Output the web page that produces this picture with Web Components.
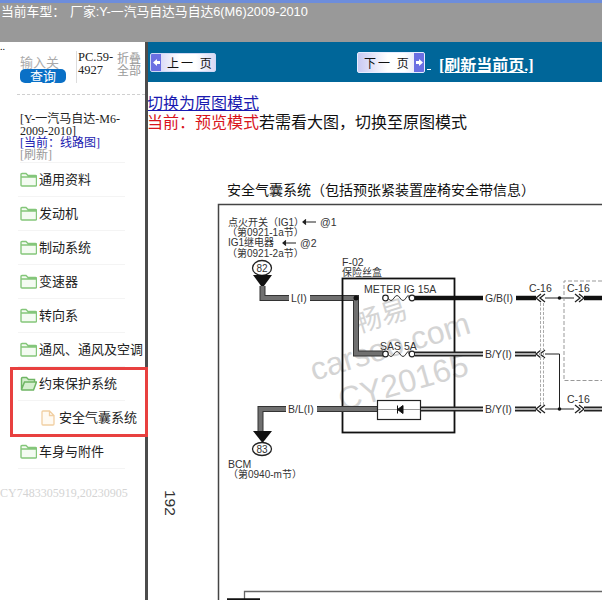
<!DOCTYPE html>
<html lang="zh">
<head>
<meta charset="utf-8">
<title>线路图</title>
<style>
  html, body { margin: 0; padding: 0; height: 600px; overflow: hidden; background: #fff; }
  body { font-family: "Liberation Serif", "Noto Sans CJK SC", serif; }
  .page { display: flex; height: 558px; }
</style>
</head>
<body>
<car-header>当前车型：&nbsp; 厂家:Y-一汽马自达马自达6(M6)2009-2010</car-header>
<div class="page">
  <side-panel>
    <tree-item>通用资料</tree-item>
    <tree-item>发动机</tree-item>
    <tree-item>制动系统</tree-item>
    <tree-item>变速器</tree-item>
    <tree-item>转向系</tree-item>
    <tree-item>通风、通风及空调</tree-item>
    <tree-item open>约束保护系统</tree-item>
    <tree-item leaf>安全气囊系统</tree-item>
    <tree-item>车身与附件</tree-item>
  </side-panel>
  <main-view></main-view>
</div>

<script>
const CJK = '"Liberation Serif", "Noto Sans CJK SC", serif';

class CarHeader extends HTMLElement {
  constructor() {
    super();
    this.attachShadow({ mode: "open" });
  }
  connectedCallback() {
    this.shadowRoot.innerHTML = `
    <style>
    :host {
      display: block;
      box-sizing: border-box;
      height: 42px;
      background: #999;
      border-top: 3px solid #6d8ddb;
      color: #fff;
      font: 12.800px/17px "Liberation Sans", "Noto Sans CJK SC", sans-serif;
      word-spacing: -1px;
      padding-left: 1px;
      white-space: nowrap;
    }
    </style>
    <slot></slot>`;
  }
}

class TreeItem extends HTMLElement {
  constructor() {
    super();
    this.attachShadow({ mode: "open" });
  }
  connectedCallback() {
    const leaf = this.hasAttribute("leaf");
    const open = this.hasAttribute("open");
    let icon = `<svg width="17" height="15" viewBox="0 0 17 15"><path d="M1 13V2.500q0-1 1-1h4l2 2h7.500q1 0 1 1V13q0 1-1 1H2q-1 0-1-1zM1 5h15.500" fill="#f4fbf2" stroke="#84c67a" stroke-width="1.400"/></svg>`;
    if (open) {
      icon = `<svg width="17" height="15" viewBox="0 0 17 15"><path d="M1.500 13V2.500q0-1 1-1h4l2 2h6v2.500M1.500 13.500l3-7.500h12l-3 8H2z" fill="#d6efcf" stroke="#6fb564" stroke-width="1.500"/></svg>`;
    }
    if (leaf) {
      icon = `<svg width="14" height="16" viewBox="0 0 14 16"><path d="M1 14V2q0-1 1-1h6.500L13 5.500V14q0 1-1 1H2q-1 0-1-1zM8.500 1v4.500H13" fill="#fffaf2" stroke="#f1cfa2" stroke-width="1.300"/></svg>`;
    }
    this.shadowRoot.innerHTML = `
    <style>
    :host {
      display: block;
      box-sizing: border-box;
      width: 107px;
      height: 34px;
      margin-left: 18px;
      border-bottom: 1px solid #f4f4f4;
      font: 13px "Noto Sans CJK SC", sans-serif;
      color: #222;
      white-space: nowrap;
    }
    :host([leaf]) { border-bottom: none; }
    .row { display: flex; align-items: center; height: 33px; gap: 2px; padding-left: 2px; }
    .row span { margin-top: -2px; }
    :host([leaf]) .row { padding-left: 23px; gap: 4px; }
    svg { flex: none; }
    </style>
    <div class="row">${icon}<span><slot></slot></span></div>`;
  }
}

class SidePanel extends HTMLElement {
  constructor() {
    super();
    this.attachShadow({ mode: "open" });
  }
  connectedCallback() {
    this.shadowRoot.innerHTML = `
    <style>
    :host {
      display: block;
      position: relative;
      flex: none;
      width: 145px;
      height: 558px;
      border-right: 3px solid #4c4c4c;
      background: #fff;
      font: 12px/12px ${CJK};
    }
    .dots { height: 10px; font-size: 10px; line-height: 10px; }
    .search { display: flex; box-sizing: border-box; margin-left: 17px; height: 43px; border-bottom: 1px dashed #d0d0d0; }
    .query { width: 59px; padding-left: 3px; box-sizing: border-box; color: #aaa; }
    .query .lab { height: 14px; margin-top: 3px; white-space: nowrap; font: 13px/14px "Noto Sans CJK SC", sans-serif; }
    .query .btn {
      width: 46px; height: 14px;
      background: #0a70c6; color: #fff; border-radius: 5px;
      text-align: center; font: 13px/14px "Noto Sans CJK SC", sans-serif;
    }
    .code { width: 39px; height: 32px; margin-top: -1px; padding-left: 1px; border-left: 1px solid #ddd; color: #222; font-size: 12.500px; line-height: 13px; }
    .fold { width: 28px; font: 12px/12px "Noto Sans CJK SC", sans-serif; color: #999; }
    .info { margin: 18px 0 0 20px; width: 105px; height: 49px; border-bottom: 1px solid #f4f4f4; color: #222; }
    .info a { display: block; color: #1a1ab0; }
    .info i { display: block; font-style: normal; color: #999; }
    .tree { display: block; }
    .mark {
      position: absolute; left: 10px; top: 325px; width: 138px; height: 70px;
      box-sizing: border-box; border: 3px solid #e8403f; pointer-events: none;
    }
    .serial { margin-top: 17px; font-size: 12px; line-height: 14px; color: #d4d4d4; white-space: nowrap; }
    </style>
    <div class="dots">..</div>
    <div class="search">
      <div class="query">
        <div class="lab">输入关</div>
        <div class="btn">查询</div>
      </div>
      <div class="code">PC.59-4927</div>
      <div class="fold">折叠全部</div>
    </div>
    <div class="info">
      [Y-一汽马自达-M6-2009-2010]
      <a>[当前：线路图]</a>
      <i>[刷新]</i>
    </div>
    <div class="tree"><slot></slot></div>
    <div class="serial">CY7483305919,20230905</div>
    <div class="mark"></div>`;
  }
}

class PageButton extends HTMLElement {
  constructor() {
    super();
    this.attachShadow({ mode: "open" });
  }
  connectedCallback() {
    const dir = this.getAttribute("dir") || "prev";
    const d = dir === "prev" ? "M1 4.500 5 1v2h3v3H5v2z" : "M8 4.500 4 1v2H1v3h3v2z";
    this.shadowRoot.innerHTML = `
    <style>
    :host {
      display: flex;
      flex: none;
      box-sizing: border-box;
      width: 66px;
      height: 19px;
      border: 1px solid #cfd8f5;
      border-radius: 2px;
      background: linear-gradient(90deg, #c9c9f2, #fff 45%, #fff 70%, #d8d8f4);
      color: #111;
      font: 12px/17px "Noto Sans CJK SC", sans-serif;
      overflow: hidden;
    }
    :host([dir="next"]) { flex-direction: row-reverse; width: 68px; height: 21px; line-height: 19px; border-color: #e6ecff; }
    .end { flex: none; width: 10px; background: #6b6fe2; display: flex; align-items: center; justify-content: center; }
    .label { flex: 1; padding-left: 6px; letter-spacing: 2px; white-space: pre; }
    </style>
    <span class="end"><svg width="9" height="9" viewBox="0 0 9 9"><path d="${d}" fill="#fff"/></svg></span>
    <span class="label"><slot></slot></span>`;
  }
}

class NavBar extends HTMLElement {
  constructor() {
    super();
    this.attachShadow({ mode: "open" });
  }
  connectedCallback() {
    this.shadowRoot.innerHTML = `
    <style>
    :host {
      display: flex;
      align-items: center;
      box-sizing: border-box;
      height: 40px;
      padding: 1px 0 0 2px;
      background: #006699;
      font: bold 16px ${CJK};
    }
    .gap { width: 141px; flex: none; }
    .tail { width: 4px; height: 8px; margin: 6px 0 0 2px; border-bottom: 1px solid #fff; flex: none; }
    a { color: #fff; text-decoration: underline; margin-left: 8px; padding-top: 3px; white-space: nowrap; }
    </style>
    <page-button dir="prev">上一 页</page-button>
    <div class="gap"></div>
    <page-button dir="next">下一 页</page-button>
    <span class="tail"></span>
    <a>[刷新当前页.]</a>`;
  }
}

class WiringDiagram extends HTMLElement {
  constructor() {
    super();
    this.attachShadow({ mode: "open" });
  }
  connectedCallback() {
    // page coordinates, the viewBox starts where this element starts
    const wire = (d) => `<path d="${d}" fill="none" stroke="#333" stroke-width="6"/><path d="${d}" fill="none" stroke="#707070" stroke-width="4"/>`;
    const dbl = (d) => `<path d="${d}" fill="none" stroke="#222" stroke-width="5"/><path d="${d}" fill="none" stroke="#ddd" stroke-width="1.500"/>`;
    const solid = (d) => `<path d="${d}" fill="none" stroke="#111" stroke-width="4.500"/>`;
    const fuse = (y) => `
      <circle cx="385.500" cy="${y}" r="2.800" fill="#fff" stroke="#222" stroke-width="1.200"/>
      <circle cx="412" cy="${y}" r="2.800" fill="#fff" stroke="#222" stroke-width="1.200"/>
      <path d="M388 ${y}q3 5 6 0t6 0 6 0 3 0" fill="none" stroke="#333" stroke-width="1"/>`;
    const chev = (x, y, flip) => `<path d="${flip ? `M${x + 5} ${y - 4}l-5 4 5 4M${x + 9} ${y - 4}l-5 4 5 4` : `M${x} ${y - 4}l5 4-5 4M${x + 4} ${y - 4}l5 4-5 4`}" fill="none" stroke="#222" stroke-width="1.300"/>`;
    this.shadowRoot.innerHTML = `
    <style>
    :host { display: block; width: 454px; height: 479px; overflow: hidden; }
    svg { display: block; }
    text { font-family: "Liberation Sans", "Noto Sans CJK SC", sans-serif; fill: #333; }
    .t { font-size: 14px; fill: #111; font-family: "Noto Sans CJK SC", sans-serif; }
    .s { font-size: 10px; }
    .m { font-size: 10.500px; fill: #333; }
    .wm { font-size: 32px; fill: #d4d4d4; }
    </style>
    <svg width="454" height="479" viewBox="148 121 454 479">
      <g>
        <text class="wm" style="font-size:27px" transform="translate(358 333) rotate(-17)">畅易</text>
        <text class="wm" transform="translate(314 381) rotate(-17)">carsoo.com</text>
        <text class="wm" transform="translate(342 411) rotate(-16)">CY20165</text>
      </g>

      <text class="t" x="227" y="195">安全气囊系统（包括预张紧装置座椅安全带信息）</text>
      <text x="0" y="0" font-size="15.500" transform="translate(165 490) rotate(90)">192</text>

      <path d="M602 204.500H218.500V600" fill="none" stroke="#444" stroke-width="1.500"/>
      <path d="M602 591.500H244.500V600" fill="none" stroke="#666" stroke-width="1.300"/>
      <path d="M227 599.500H260" stroke="#111" stroke-width="2.500"/>

      <text class="s" x="228" y="225.500">点火开关（IG1）</text>
      <path d="M316 222H303m3-2.500-3 2.500 3 2.500" fill="#222" stroke="#222" stroke-width="1.200"/>
      <text class="m" x="320" y="225.500">@1</text>
      <text class="s" x="227" y="236">（第0921-1a节）</text>
      <text class="s" x="228" y="246">IG1继电器</text>
      <path d="M296 243H283m3-2.500-3 2.500 3 2.500" fill="#222" stroke="#222" stroke-width="1.200"/>
      <text class="m" x="300" y="246.500">@2</text>
      <text class="s" x="227" y="256.500">（第0921-2a节）</text>

      <ellipse cx="262" cy="268" rx="9.500" ry="7.500" fill="#fff" stroke="#222" stroke-width="1.300"/>
      <text class="s" x="262" y="271.500" text-anchor="middle">82</text>
      <path d="M253 275h19l-9.500 13z" fill="#111"/>
      ${wire("M262.500 286V298H289")}
      ${wire("M310 298H356V353.500H383")}
      <text class="m" x="291" y="301.500">L(I)</text>
      <circle cx="356" cy="298" r="2.500" fill="#111"/>

      <text class="m" x="342" y="266">F-02</text>
      <text class="s" x="342" y="275.500">保险丝盒</text>
      <rect x="342.500" y="278.500" width="112" height="154" fill="none" stroke="#111" stroke-width="1.800"/>

      <text class="m" x="364" y="293">METER IG 15A</text>
      <text class="m" x="380" y="349.500">SAS 5A</text>
      ${fuse(298)}
      ${fuse(354)}

      ${solid("M415 298H483")}
      <text class="m" x="485" y="301.500">G/B(I)</text>
      ${solid("M516 298H536")}

      ${dbl("M415 354H483")}
      <text class="m" x="485" y="357.500">B/Y(I)</text>
      ${dbl("M515 354H536")}

      ${wire("M286 409H260.500V432")}
      <text class="m" x="288" y="412.500">B/L(I)</text>
      ${wire("M317 409H377")}
      <path d="M253 431h19l-9.500 12z" fill="#111"/>
      <ellipse cx="262" cy="449" rx="9.500" ry="6.500" fill="#fff" stroke="#222" stroke-width="1.300"/>
      <text class="s" x="262" y="452.500" text-anchor="middle">83</text>
      <text class="m" x="228" y="468">BCM</text>
      <text class="s" x="228" y="478">（第0940-m节）</text>

      <rect x="377.500" y="400.500" width="43" height="19" fill="#fff" stroke="#222" stroke-width="1.200"/>
      <path d="M378 409.500h42" stroke="#999" stroke-width="1"/>
      <path d="M403 405.500v8l-5.500-4zM397.500 405.500v8" fill="#111" stroke="#111"/>
      ${dbl("M421 409H483")}
      <text class="m" x="485" y="412.500">B/Y(I)</text>
      ${dbl("M515 409H536")}

      <text class="m" x="529" y="291.500">C-16</text>
      <text class="m" x="567" y="291.500">C-16</text>
      <text class="m" x="567" y="402.500">C-16</text>
      ${chev(536, 298, true)}
      ${chev(536, 354, true)}
      ${chev(536, 409, true)}
      <path d="M540.500 303V405M543.500 303V405" fill="none" stroke="#aaa" stroke-width="1" stroke-dasharray="3 1.500"/>
      <path d="M545 298H574M545 354H559.500V409M545 409H574" fill="none" stroke="#222" stroke-width="1"/>
      <circle cx="559.500" cy="298" r="1.800" fill="#111"/>
      <circle cx="559.500" cy="409" r="1.800" fill="#111"/>
      <path d="M602 281H564V380.500H602" fill="none" stroke="#999" stroke-width="1" stroke-dasharray="4 2"/>
      ${chev(575, 298, false)}
      ${chev(575, 409, false)}
      ${solid("M584 298H602")}
      ${dbl("M584 409H602")}
    </svg>`;
  }
}

class MainView extends HTMLElement {
  constructor() {
    super();
    this.attachShadow({ mode: "open" });
  }
  connectedCallback() {
    this.shadowRoot.innerHTML = `
    <style>
    :host {
      display: block;
      flex: 1;
      min-width: 0;
      font: 16px/19px "Noto Sans CJK SC", sans-serif;
      overflow: hidden;
    }
    .mode { height: 28px; padding-top: 11px; margin-left: -1px; white-space: nowrap; color: #111; line-height: 19px; }
    .mode a { color: #1a1ab0; text-decoration: underline; display: block; }
    .mode b { font-weight: normal; color: #d8141c; }
    </style>
    <nav-bar></nav-bar>
    <div class="mode">
      <a>切换为原图模式</a>
      <b>当前：预览模式</b>若需看大图，切换至原图模式
    </div>
    <wiring-diagram></wiring-diagram>`;
  }
}

customElements.define("car-header", CarHeader);
customElements.define("tree-item", TreeItem);
customElements.define("side-panel", SidePanel);
customElements.define("page-button", PageButton);
customElements.define("nav-bar", NavBar);
customElements.define("wiring-diagram", WiringDiagram);
customElements.define("main-view", MainView);
</script>
</body>
</html>
